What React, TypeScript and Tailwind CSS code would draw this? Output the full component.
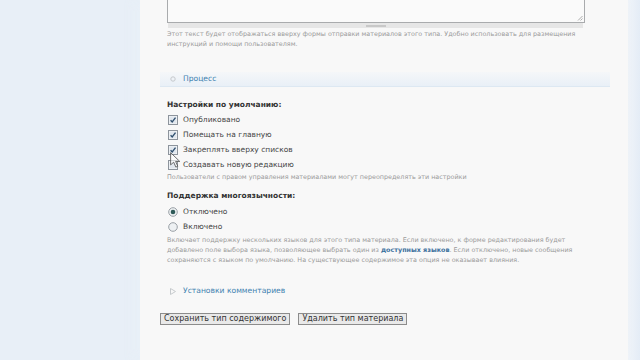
import React from 'react';

const font = { fontFamily: '"DejaVu Sans", Verdana, sans-serif' };

const Checkbox = ({ checked }: { checked: boolean }) => (
  <svg width="10" height="10" viewBox="0 0 10 10" className="shrink-0">
    <rect x="0.5" y="0.5" width="9" height="9" fill="#f4f6f8" stroke="#8d949c" />
    <rect x="1.5" y="1.5" width="7" height="7" fill="#e1e7ee" />
    {checked && <path d="M2.6 5.2 L4.2 7 L7.5 2.6" fill="none" stroke="#2f4f6e" strokeWidth="1.3" />}
  </svg>
);

const Radio = ({ checked }: { checked: boolean }) => (
  <svg width="10" height="10" viewBox="0 0 10 10" className="shrink-0">
    <circle cx="5" cy="5" r="4.3" fill="#eef1f3" stroke="#9aa0a6" />
    {checked && <circle cx="5" cy="5" r="2.3" fill="#2e5a58" />}
  </svg>
);

const Legend = ({ label, icon }: { label: string; icon: 'circle' | 'tri' }) => (
  <div className="flex items-center h-[14px] pl-[10px] gap-[7px]">
    {icon === 'circle' ? (
      <svg width="6" height="6" viewBox="0 0 6 6">
        <circle cx="3" cy="3" r="2.2" fill="none" stroke="#c4c8cc" />
      </svg>
    ) : (
      <svg width="6" height="7" viewBox="0 0 6 7">
        <path d="M0.5 0.5 L5.5 3.5 L0.5 6.5 Z" fill="none" stroke="#c6cacd" />
      </svg>
    )}
    <span className="text-[7.6px] text-[#3f82b0]">{label}</span>
  </div>
);

const App = () => {
  return (
    <div className="w-[640px] h-[360px] flex bg-[#e8eff7] overflow-hidden" style={font}>
      <div className="w-[140px] shrink-0" />
      <div className="w-[488px] shrink-0 bg-[#f8f8f8] relative shadow-[-6px_0_10px_rgba(232,239,247,0.9)] pl-[20px] pr-[30px]">
        {/* textarea */}
        <div className="ml-[7px] w-[418px] h-[23px] border-x border-b border-[#a9abad] bg-[#fafafa] relative">
          <svg width="6" height="6" viewBox="0 0 6 6" className="absolute right-[1px] bottom-[1px]">
            <path d="M5.5 1 L1 5.5 M5.5 3.5 L3.5 5.5" stroke="#9a9a9a" strokeWidth="0.8" />
          </svg>
        </div>
        <div className="ml-[8px] w-[415px] h-[5px] bg-[#e6e6e6] flex justify-center items-center">
          <div className="w-[20px] h-[2px] bg-[#c8c8c8]" />
        </div>
        <p className="ml-[7px] mt-[2px] text-[6.4px] leading-[9.5px] text-[#9a9a9a] w-[430px]">
          Этот текст будет отображаться вверху формы отправки материалов этого типа. Удобно использовать для размещения инструкций и помощи пользователям.
        </p>

        <div className="mt-[23px] w-[450px] bg-gradient-to-b from-[#f5f7f9] to-[#e9f0f7] border-b border-[#dde8f2]">
          <Legend label="Процесс" icon="circle" />
        </div>

        <div className="ml-[7px] mt-[13px] relative">
          <div className="text-[7.5px] font-bold text-[#333] leading-[10px]">Настройки по умолчанию:</div>
          <div className="mt-[5px] flex flex-col gap-[5px]">
            {[
              ['Опубликовано', true],
              ['Помещать на главную', true],
              ['Закреплять вверху списков', true],
              ['Создавать новую редакцию', false],
            ].map(([label, checked]) => (
              <div key={label as string} className="flex items-center gap-[5px] h-[10px] pl-[1px]">
                <Checkbox checked={checked as boolean} />
                <span className="text-[7.5px] text-[#444]">{label}</span>
              </div>
            ))}
          </div>
          <p className="mt-[3px] text-[6.4px] leading-[9px] text-[#9a9a9a]">
            Пользователи с правом управления материалами могут переопределять эти настройки
          </p>
          {/* mouse pointer */}
          <svg width="11" height="16" viewBox="0 0 9 13" className="absolute left-[3px] top-[52px]">
            <path d="M0.5 0.5 L0.5 10.5 L3 8.3 L4.8 12.3 L6.4 11.6 L4.6 7.7 L8 7.7 Z" fill="#fff" fillOpacity="0.6" stroke="#555" strokeWidth="0.7" />
          </svg>

          <div className="mt-[9px] text-[7.5px] font-bold text-[#333] leading-[10px]">Поддержка многоязычности:</div>
          <div className="mt-[6px] flex flex-col gap-[5px]">
            <div className="flex items-center gap-[5px] h-[10px] pl-[1px]">
              <Radio checked />
              <span className="text-[7.5px] text-[#444]">Отключено</span>
            </div>
            <div className="flex items-center gap-[5px] h-[10px] pl-[1px]">
              <Radio checked={false} />
              <span className="text-[7.5px] text-[#444]">Включено</span>
            </div>
          </div>
          <p className="mt-[3px] text-[6.4px] leading-[10px] text-[#9a9a9a] w-[428px]">
            Включает поддержку нескольких языков для этого типа материала. Если включено, к форме редактирования будет добавлено поле выбора языка, позволяющее выбрать один из{' '}
            <span className="text-[#3a6f9c] font-semibold">доступных языков</span>. Если отключено, новые сообщения сохраняются с языком по умолчанию. На существующее содержимое эта опция не оказывает влияния.
          </p>
        </div>

        <div className="mt-[19px]">
          <Legend label="Установки комментариев" icon="tri" />
        </div>

        <div className="mt-[15px] flex gap-[8px]">
          <button className="h-[12px] px-[3px] border border-[#8c8c8c] bg-[#e9e9e9] text-[8px] leading-[10px] text-[#333]">
            Сохранить тип содержимого
          </button>
          <button className="h-[12px] px-[3px] border border-[#8c8c8c] bg-[#e9e9e9] text-[8px] leading-[10px] text-[#333]">
            Удалить тип материала
          </button>
        </div>
      </div>
      <div className="flex-1 bg-gradient-to-r from-[#f0f4f9] to-[#e4ecf6]" />
    </div>
  );
};

export default App;
